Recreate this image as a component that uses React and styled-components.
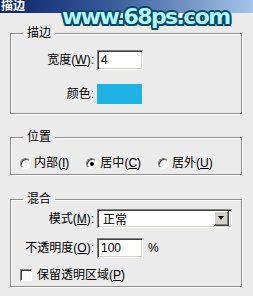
import styled, { createGlobalStyle } from "styled-components";

const GlobalStyle = createGlobalStyle`
  html, body {
    margin: 0;
    padding: 0;
    background: #ebebeb;
  }
  body {
    font-family: "Liberation Sans", "Noto Sans CJK SC", sans-serif;
    font-size: 12px;
    color: #000;
    text-autospace: no-autospace;
  }
`;

const Window = styled.div`
  position: relative;
  width: 253px;
  height: 296px;
  overflow: hidden;
  background: #ebebeb;
`;

const TitleBar = styled.div`
  height: 13px;
  background: linear-gradient(to right, #0a246a 0%, #3a5d9c 45%, #a6c4e8 100%);
  color: #fff;
  font-weight: bold;
  font-size: 12px;
  line-height: 13px;
  padding-left: 1px;
  overflow: hidden;
`;

const Watermark = styled.div`
  position: absolute;
  left: 62px;
  top: 4px;
  font-family: "DejaVu Sans", sans-serif;
  font-weight: bold;
  font-size: 22px;
  line-height: 26px;
  letter-spacing: -1.6px;
  color: #b2f5fc;
  text-shadow: 2px 0 0 #0d4864, -2px 0 0 #0d4864, 0 2px 0 #0d4864,
    0 -2px 0 #0d4864, 1.5px 1.5px 0 #0d4864, -1.5px 1.5px 0 #0d4864,
    1.5px -1.5px 0 #0d4864, -1.5px -1.5px 0 #0d4864;
`;

const Body = styled.div`
  padding: 13px 11px 0 10px;
  display: flex;
  flex-direction: column;
`;

const Group = styled.fieldset`
  margin: 0 0 ${(p) => p.$after || 0}px 0;
  padding: ${(p) => p.$pad};
  border: 1px solid #8e8e8e;
  box-shadow: inset 1px 1px 0 #fff, 1px 1px 0 #fff;
  min-width: 0;
`;

const Legend = styled.legend`
  margin-left: 12px;
  padding: 0 4px;
  font-size: 12px;
  line-height: 14px;
`;

const FormGrid = styled.div`
  display: grid;
  grid-template-columns: 83px auto;
  column-gap: 3px;
  row-gap: ${(p) => p.$gap}px;
  align-items: center;
  justify-items: start;
`;

const Label = styled.label`
  justify-self: end;
  line-height: 14px;
  white-space: nowrap;
`;

const Key = styled.span`
  text-decoration: underline;
`;

const Sunken = styled.div`
  box-sizing: border-box;
  height: 20px;
  background: #fff;
  border-top: 1px solid #808080;
  border-left: 1px solid #808080;
  border-bottom: 1px solid #fff;
  border-right: 1px solid #fff;
  box-shadow: inset 1px 1px 0 #404040, inset -1px -1px 0 #d4d0c8;
  display: flex;
  align-items: center;
`;

const TextInput = styled(Sunken)`
  width: 46px;
  padding-left: 3px;
  line-height: 14px;
`;

const Swatch = styled.div`
  width: 45px;
  height: 20px;
  background: #1fb3e5;
`;

const Select = styled(Sunken)`
  width: 135px;
  height: 19px;
  padding: 0 2px 0 5px;
  justify-content: space-between;
`;

const DropButton = styled.div`
  width: 15px;
  height: 15px;
  box-sizing: border-box;
  background: #d4d0c8;
  box-shadow: inset -1px -1px 0 #404040, inset 1px 1px 0 #fff,
    inset -2px -2px 0 #808080;
  display: flex;
  align-items: center;
  justify-content: center;

  &::after {
    content: "";
    border-left: 3.5px solid transparent;
    border-right: 3.5px solid transparent;
    border-top: 4px solid #000;
    margin: 0 1px 1px 0;
  }
`;

const InlineRow = styled.div`
  display: flex;
  align-items: center;
  gap: 5px;
`;

const RadioRow = styled.div`
  display: flex;
  align-items: center;
  padding-left: 9px;
  gap: 17px;
`;

const Option = styled.div`
  display: flex;
  align-items: center;
  gap: 3px;
  line-height: 14px;
  white-space: nowrap;
`;

const Radio = styled.span`
  position: relative;
  box-sizing: border-box;
  width: 11px;
  height: 11px;
  border-radius: 50%;
  border: 1px solid;
  border-color: #808080 #fff #fff #808080;
  background: #fafafa;
  box-shadow: inset 1px 1px 0 #404040;

  &::after {
    content: "";
    display: ${(p) => (p.$checked ? "block" : "none")};
    position: absolute;
    left: 3px;
    top: 3px;
    width: 4px;
    height: 4px;
    border-radius: 50%;
    background: #000;
  }
`;

const CheckRow = styled.div`
  grid-column: 1 / -1;
  display: flex;
  align-items: center;
  gap: 5px;
  padding-left: 9px;
  line-height: 14px;
`;

const CheckBox = styled.span`
  box-sizing: border-box;
  width: 12px;
  height: 12px;
  border: 1px solid;
  border-color: #808080 #fff #fff #808080;
  background: #fafafa;
  box-shadow: inset 1px 1px 0 #404040;
`;

const positions = [
  { text: "内部", key: "I" },
  { text: "居中", key: "C", checked: true },
  { text: "居外", key: "U" },
];

export default function App() {
  return (
    <Window>
      <GlobalStyle />
      <TitleBar>描边</TitleBar>
      <Watermark>www.68ps.com</Watermark>
      <Body>
        <Group $pad="10px 0 9px 0" $after={16}>
          <Legend>描边</Legend>
          <FormGrid $gap={14}>
            <Label>
              宽度(<Key>W</Key>):
            </Label>
            <TextInput>4</TextInput>
            <Label>颜色:</Label>
            <Swatch />
          </FormGrid>
        </Group>

        <Group $pad="12px 0 4px 0" $after={17}>
          <Legend>位置</Legend>
          <RadioRow>
            {positions.map((p) => (
              <Option key={p.key}>
                <Radio $checked={p.checked} />
                <span>
                  {p.text}(<Key>{p.key}</Key>)
                </span>
              </Option>
            ))}
          </RadioRow>
        </Group>

        <Group $pad="3px 0 4px 0">
          <Legend>混合</Legend>
          <FormGrid $gap={10}>
            <Label>
              模式(<Key>M</Key>):
            </Label>
            <Select>
              <span>正常</span>
              <DropButton />
            </Select>
            <Label>
              不透明度(<Key>O</Key>):
            </Label>
            <InlineRow>
              <TextInput>100</TextInput>
              <span>%</span>
            </InlineRow>
            <CheckRow>
              <CheckBox />
              <span>
                保留透明区域(<Key>P</Key>)
              </span>
            </CheckRow>
          </FormGrid>
        </Group>
      </Body>
    </Window>
  );
}
